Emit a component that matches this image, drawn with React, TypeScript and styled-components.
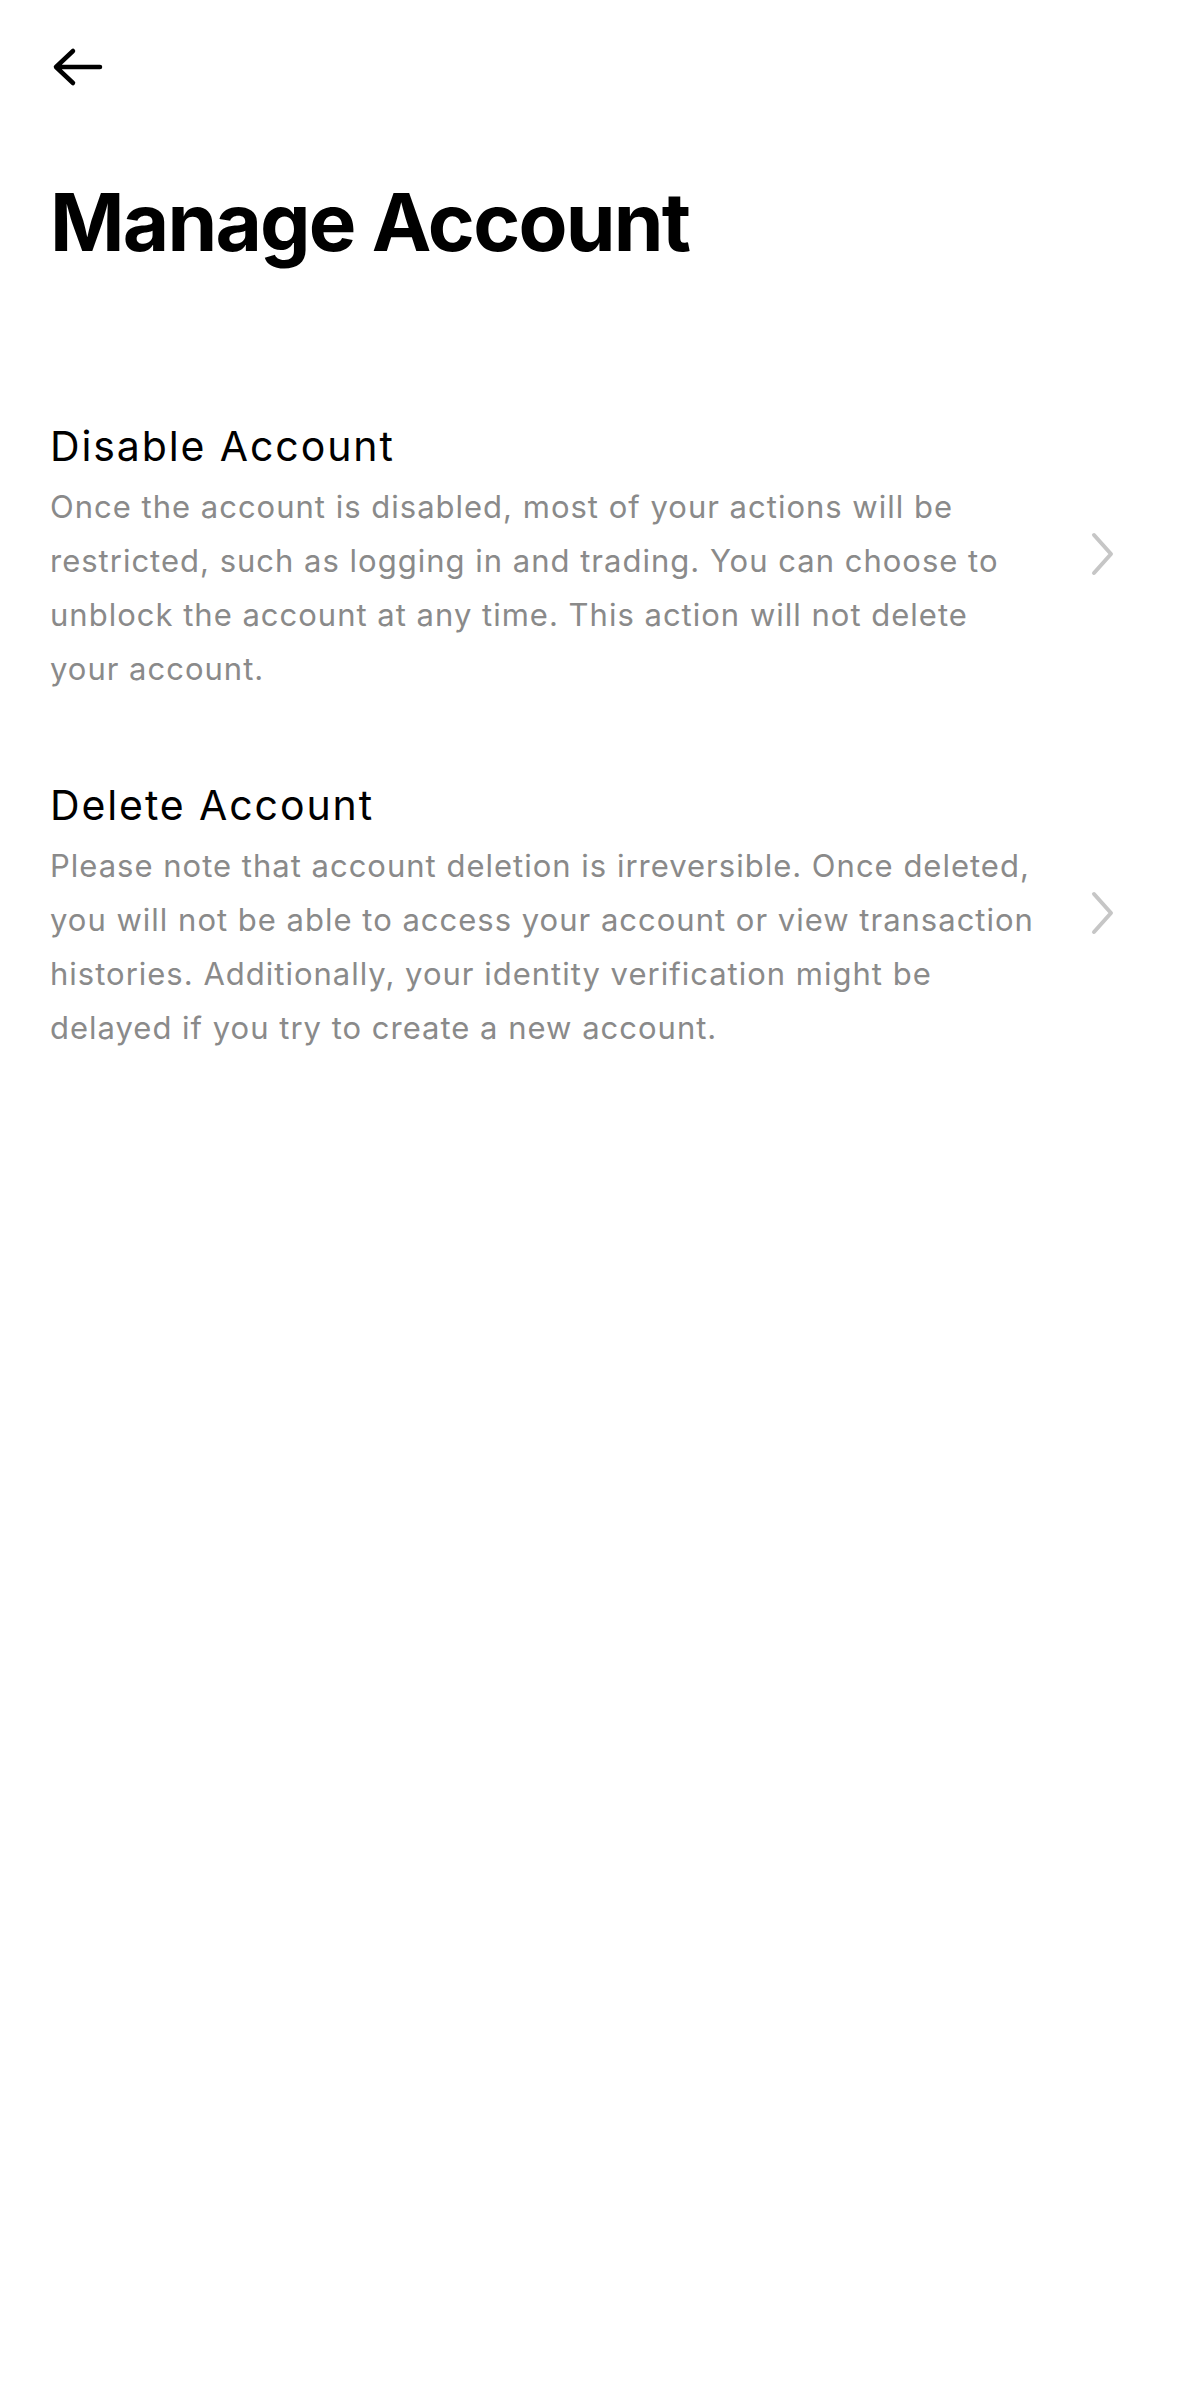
import React from "react";
import styled, { createGlobalStyle } from "styled-components";

interface IAccountAction {
  id: string;
  title: string;
  description: string;
}

const actions: IAccountAction[] = [
  {
    id: "disable",
    title: "Disable Account",
    description:
      "Once the account is disabled, most of your actions will be restricted, such as logging in and trading. You can choose to unblock the account at any time. This action will not delete your account.",
  },
  {
    id: "delete",
    title: "Delete Account",
    description:
      "Please note that account deletion is irreversible. Once deleted, you will not be able to access your account or view transaction histories. Additionally, your identity verification might be delayed if you try to create a new account.",
  },
];

const BackIcon = (): JSX.Element => (
  <svg width="56" height="40" viewBox="0 0 56 40" fill="none">
    <path
      d="M6 20H50M23 4L6 20L23 36"
      stroke="#000"
      strokeWidth="4.5"
      strokeLinecap="round"
      strokeLinejoin="round"
    />
  </svg>
);

const ChevronIcon = (): JSX.Element => (
  <svg width="24" height="44" viewBox="0 0 24 44" fill="none">
    <path
      d="M4 3L21 22L4 41"
      stroke="#c6c6c6"
      strokeWidth="4"
      strokeLinecap="round"
      strokeLinejoin="round"
    />
  </svg>
);

const ActionRow = ({ item }: { item: IAccountAction }): JSX.Element => {
  return (
    <StyledRow>
      <div className="text-area">
        <h3>{item.title}</h3>
        <p>{item.description}</p>
      </div>
      <div className="chevron">
        <ChevronIcon />
      </div>
    </StyledRow>
  );
};

const App = (): JSX.Element => {
  return (
    <>
      <GlobalStyle />
      <StyledPage>
        <TopBar>
          <BackButton aria-label="Back">
            <BackIcon />
          </BackButton>
        </TopBar>
        <Title>Manage Account</Title>
        <ActionList>
          {actions.map((item) => (
            <ActionRow key={item.id} item={item} />
          ))}
        </ActionList>
      </StyledPage>
    </>
  );
};

const GlobalStyle = createGlobalStyle`
  body {
    margin: 0;
    background: #fff;
    font-family: Inter, "Noto Sans", sans-serif;
  }
`;

const StyledPage = styled.div`
  box-sizing: border-box;
  min-height: 100vh;
  padding: 0 50px;
  background: #fff;
`;

const TopBar = styled.div`
  box-sizing: border-box;
  height: 134px;
  padding-top: 47px;
  display: flex;
  align-items: flex-start;
`;

const BackButton = styled.button`
  display: flex;
  padding: 0;
  margin: 0;
  border: none;
  background: none;
  cursor: pointer;
`;

const Title = styled.h1`
  margin: 40px 0 0;
  font-size: 80px;
  line-height: 96px;
  font-weight: 700;
  color: #000;
  letter-spacing: -1.8px;
`;

const ActionList = styled.div`
  margin-top: 150px;
  display: flex;
  flex-direction: column;
  gap: 83px;
`;

const StyledRow = styled.div`
  display: flex;
  align-items: center;
  cursor: pointer;

  & > .text-area {
    width: 988px;

    & h3 {
      margin: 0;
      font-size: 41px;
      line-height: 52px;
      font-weight: 400;
      color: #000;
      letter-spacing: 1.9px;
    }

    & p {
      margin: 8px 0 0;
      font-size: 31px;
      line-height: 54px;
      color: #8a8a8a;
      letter-spacing: 1px;
    }
  }

  & > .chevron {
    display: flex;
    margin-left: 52px;
    margin-bottom: 8px;
  }
`;

export default App;
